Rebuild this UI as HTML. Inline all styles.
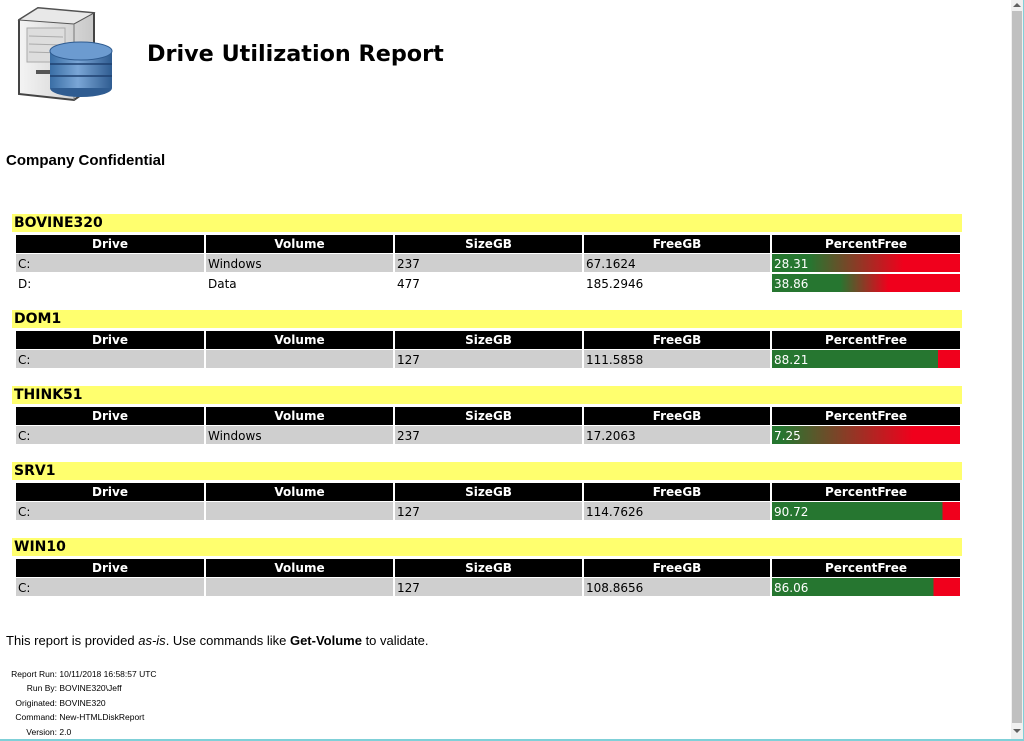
<!DOCTYPE html>
<html><head><meta charset="utf-8"><style>
body{margin:0;width:1024px;height:741px;overflow:hidden;background:#fff;font-family:"DejaVu Sans","Liberation Sans",sans-serif;position:relative}
.a{position:absolute}
.bar{position:absolute;left:12px;width:950px;height:18px;background:#ffff6e;font-weight:bold;font-size:14px;line-height:19px;padding-left:2px;box-sizing:border-box}
.c{position:absolute;height:18px;font-size:12px;line-height:20px;box-sizing:border-box;padding-left:2px;white-space:nowrap}
.h{background:#000;color:#fff;font-weight:bold;text-align:center;padding:0;line-height:19px}
.g{background:#cfcfcf}
.p{color:#fff}
</style></head><body>
<svg class="a" style="left:14px;top:6px" width="106" height="98" viewBox="0 0 106 98">
<defs><linearGradient id="tw" x1="0" x2="1"><stop offset="0" stop-color="#f4f4f4"/><stop offset="1" stop-color="#c8c8c8"/></linearGradient>
<linearGradient id="cy" x1="0" x2="1"><stop offset="0" stop-color="#3a6ea5"/><stop offset=".45" stop-color="#7aa6d6"/><stop offset="1" stop-color="#2f5c91"/></linearGradient></defs>
<path d="M5 14 L24 2 L80 7 L80 80 L60 94 L5 88 Z" fill="url(#tw)" stroke="#444" stroke-width="2"/>
<path d="M24 2 L80 7 L60 18 L5 14 Z" fill="#e8e8e8" stroke="#555"/>
<path d="M60 18 L60 94" stroke="#777"/>
<rect x="13" y="22" width="38" height="34" fill="#ddd" stroke="#aaa"/>
<line x1="15" y1="30" x2="49" y2="31" stroke="#aaa"/><line x1="15" y1="38" x2="49" y2="39" stroke="#aaa"/><line x1="15" y1="46" x2="49" y2="47" stroke="#aaa"/>
<rect x="22" y="64" width="22" height="4" fill="#555"/>
<ellipse cx="67" cy="82" rx="31" ry="9" fill="#2f5c91"/>
<rect x="36" y="45" width="62" height="37" fill="url(#cy)"/>
<line x1="36" y1="58" x2="98" y2="58" stroke="#1f4170" stroke-width="1.5"/><line x1="36" y1="70" x2="98" y2="70" stroke="#1f4170" stroke-width="1.5"/>
<ellipse cx="67" cy="45" rx="31" ry="9" fill="#6c9bd0" stroke="#2f5c91"/>
</svg>
<div class="a" style="left:147px;top:41px;font-size:22.3px;font-weight:bold;font-family:'DejaVu Sans',sans-serif">Drive Utilization Report</div>
<div class="a" style="left:6px;top:152px;font-size:15px;font-weight:bold;font-family:'Liberation Sans',sans-serif">Company Confidential</div>

<!-- BOVINE320 -->
<div class="bar" style="top:214px">BOVINE320</div>
<div class="c h" style="top:235px;left:16px;width:188px">Drive</div><div class="c h" style="top:235px;left:206px;width:187px">Volume</div><div class="c h" style="top:235px;left:395px;width:187px">SizeGB</div><div class="c h" style="top:235px;left:584px;width:186px">FreeGB</div><div class="c h" style="top:235px;left:772px;width:188px">PercentFree</div>
<div class="c g" style="top:254px;left:16px;width:188px">C:</div><div class="c g" style="top:254px;left:206px;width:187px">Windows</div><div class="c g" style="top:254px;left:395px;width:187px">237</div><div class="c g" style="top:254px;left:584px;width:186px">67.1624</div><div class="c p" style="top:254px;left:772px;width:188px;background:linear-gradient(90deg,#267630 20%,#f0001c 70%)">28.31</div>
<div class="c" style="top:274px;left:16px;width:188px">D:</div><div class="c" style="top:274px;left:206px;width:187px">Data</div><div class="c" style="top:274px;left:395px;width:187px">477</div><div class="c" style="top:274px;left:584px;width:186px">185.2946</div><div class="c p" style="top:274px;left:772px;width:188px;background:linear-gradient(90deg,#267630 36%,#f0001c 62%)">38.86</div>

<!-- DOM1 -->
<div class="bar" style="top:310px">DOM1</div>
<div class="c h" style="top:331px;left:16px;width:188px">Drive</div><div class="c h" style="top:331px;left:206px;width:187px">Volume</div><div class="c h" style="top:331px;left:395px;width:187px">SizeGB</div><div class="c h" style="top:331px;left:584px;width:186px">FreeGB</div><div class="c h" style="top:331px;left:772px;width:188px">PercentFree</div>
<div class="c g" style="top:350px;left:16px;width:188px">C:</div><div class="c g" style="top:350px;left:206px;width:187px"></div><div class="c g" style="top:350px;left:395px;width:187px">127</div><div class="c g" style="top:350px;left:584px;width:186px">111.5858</div><div class="c p" style="top:350px;left:772px;width:188px;background:linear-gradient(90deg,#267630 88.2%,#f0001c 88.2%)">88.21</div>

<!-- THINK51 -->
<div class="bar" style="top:386px">THINK51</div>
<div class="c h" style="top:407px;left:16px;width:188px">Drive</div><div class="c h" style="top:407px;left:206px;width:187px">Volume</div><div class="c h" style="top:407px;left:395px;width:187px">SizeGB</div><div class="c h" style="top:407px;left:584px;width:186px">FreeGB</div><div class="c h" style="top:407px;left:772px;width:188px">PercentFree</div>
<div class="c g" style="top:426px;left:16px;width:188px">C:</div><div class="c g" style="top:426px;left:206px;width:187px">Windows</div><div class="c g" style="top:426px;left:395px;width:187px">237</div><div class="c g" style="top:426px;left:584px;width:186px">17.2063</div><div class="c p" style="top:426px;left:772px;width:188px;background:linear-gradient(90deg,#267630 5%,#f0001c 75%)">7.25</div>

<!-- SRV1 -->
<div class="bar" style="top:462px">SRV1</div>
<div class="c h" style="top:483px;left:16px;width:188px">Drive</div><div class="c h" style="top:483px;left:206px;width:187px">Volume</div><div class="c h" style="top:483px;left:395px;width:187px">SizeGB</div><div class="c h" style="top:483px;left:584px;width:186px">FreeGB</div><div class="c h" style="top:483px;left:772px;width:188px">PercentFree</div>
<div class="c g" style="top:502px;left:16px;width:188px">C:</div><div class="c g" style="top:502px;left:206px;width:187px"></div><div class="c g" style="top:502px;left:395px;width:187px">127</div><div class="c g" style="top:502px;left:584px;width:186px">114.7626</div><div class="c p" style="top:502px;left:772px;width:188px;background:linear-gradient(90deg,#267630 90.7%,#f0001c 90.7%)">90.72</div>

<!-- WIN10 -->
<div class="bar" style="top:538px">WIN10</div>
<div class="c h" style="top:559px;left:16px;width:188px">Drive</div><div class="c h" style="top:559px;left:206px;width:187px">Volume</div><div class="c h" style="top:559px;left:395px;width:187px">SizeGB</div><div class="c h" style="top:559px;left:584px;width:186px">FreeGB</div><div class="c h" style="top:559px;left:772px;width:188px">PercentFree</div>
<div class="c g" style="top:578px;left:16px;width:188px">C:</div><div class="c g" style="top:578px;left:206px;width:187px"></div><div class="c g" style="top:578px;left:395px;width:187px">127</div><div class="c g" style="top:578px;left:584px;width:186px">108.8656</div><div class="c p" style="top:578px;left:772px;width:188px;background:linear-gradient(90deg,#267630 86%,#f0001c 86%)">86.06</div>

<div class="a" style="left:6px;top:633px;font-size:13px;font-family:'Liberation Sans',sans-serif">This report is provided <i>as-is</i>. Use commands like <b>Get-Volume</b> to validate.</div>
<div class="a" style="left:0;top:667px;font-size:8.5px;line-height:14.4px;font-family:'Liberation Sans',sans-serif">
<div><span style="display:inline-block;width:57px;text-align:right">Report Run:</span> 10/11/2018 16:58:57 UTC</div>
<div><span style="display:inline-block;width:57px;text-align:right">Run By:</span> BOVINE320\Jeff</div>
<div><span style="display:inline-block;width:57px;text-align:right">Originated:</span> BOVINE320</div>
<div><span style="display:inline-block;width:57px;text-align:right">Command:</span> New-HTMLDiskReport</div>
<div><span style="display:inline-block;width:57px;text-align:right">Version:</span> 2.0</div>
</div>
<div class="a" style="left:1011px;top:0;width:12px;height:739px;background:#f0f0f0"></div>
<div class="a" style="left:1012px;top:11px;width:10px;height:712px;background:#c0c0c0"></div>
<div class="a" style="left:1013px;top:3px;width:0;height:0;border-left:4px solid transparent;border-right:4px solid transparent;border-bottom:4px solid #606060"></div>
<div class="a" style="left:1013px;top:729px;width:0;height:0;border-left:4px solid transparent;border-right:4px solid transparent;border-top:4px solid #606060"></div>
<div class="a" style="left:1023px;top:0;width:1px;height:741px;background:#7fd0d8"></div>
<div class="a" style="left:0;top:739px;width:1024px;height:2px;background:#7fd0d8"></div>
</body></html>
